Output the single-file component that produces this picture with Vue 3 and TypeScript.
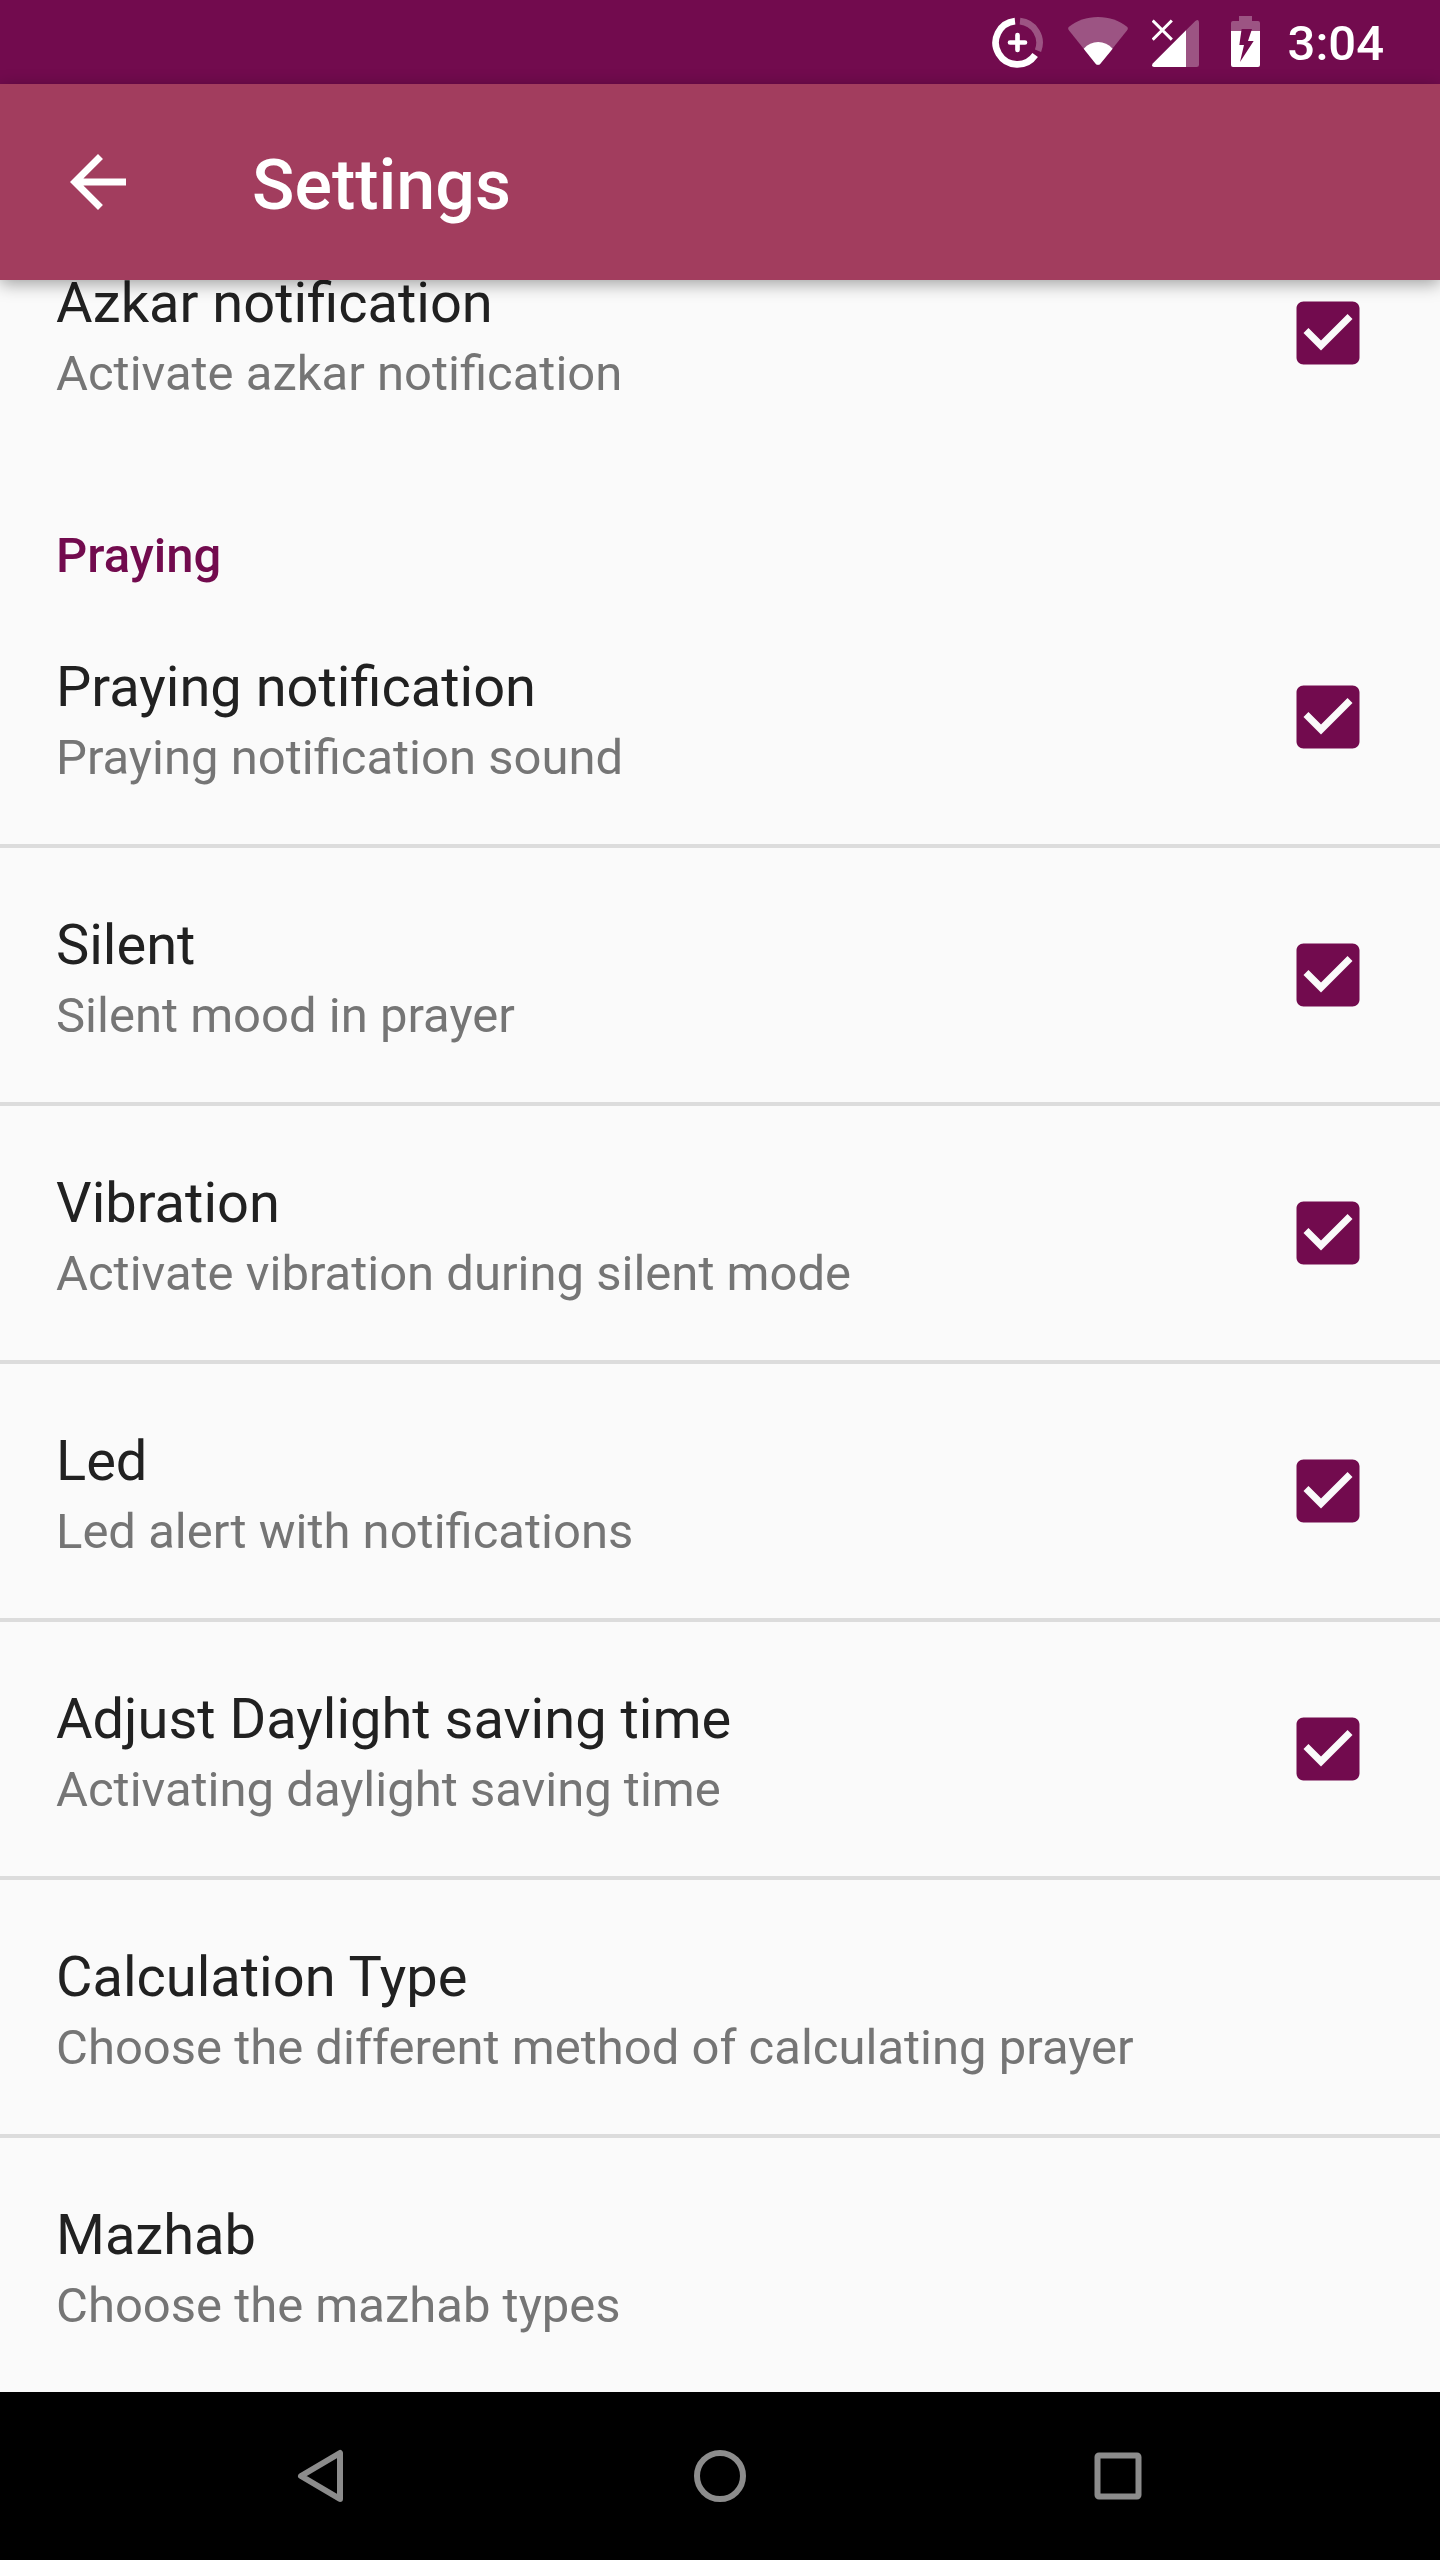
<script setup lang="ts">
import { reactive } from 'vue'

interface Preference {
  id: string
  title: string
  summary: string
  checked?: boolean
}

const azkar = reactive<Preference[]>([
  { id: 'azkar', title: 'Azkar notification', summary: 'Activate azkar notification', checked: true },
])

const praying = reactive<Preference[]>([
  { id: 'praying', title: 'Praying notification', summary: 'Praying notification sound', checked: true },
  { id: 'silent', title: 'Silent', summary: 'Silent mood in prayer', checked: true },
  { id: 'vibration', title: 'Vibration', summary: 'Activate vibration during silent mode', checked: true },
  { id: 'led', title: 'Led', summary: 'Led alert with notifications', checked: true },
  { id: 'daylight', title: 'Adjust Daylight saving time', summary: 'Activating daylight saving time', checked: true },
  { id: 'calculation', title: 'Calculation Type', summary: 'Choose the different method of calculating prayer' },
  { id: 'mazhab', title: 'Mazhab', summary: 'Choose the mazhab types' },
])

const groups = [
  { id: 'azkar-group', heading: '', items: azkar },
  { id: 'praying-group', heading: 'Praying', items: praying },
]
</script>

<template>
  <div class="screen">
    <div class="status-bar">
      <svg class="status-icon saver" viewBox="66 48 153 156" aria-hidden="true">
        <g fill="none" stroke="#fff" stroke-width="20">
          <path d="M135 63.400A65 65 0 1 0 195.500 165" />
          <path d="M150 63.400A65 65 0 0 1 204 152" opacity="0.3" />
        </g>
        <path d="M142.500 105V150M120 127.500H165" stroke="#fff" stroke-width="14" stroke-linecap="round" />
      </svg>
      <svg class="status-icon wifi" viewBox="294 48 180 156" aria-hidden="true">
        <path
          d="M296 81C320 62 350 51 384 51S448 62 472 81Q475 85 472 90L391 191Q384 198 377 191L296 90Q293 85 296 81Z"
          fill="#fff"
          opacity="0.3"
        />
        <path d="M341 146C353 133 368 126 384.500 126S416 133 428 146L391 191Q384 198 377 191Z" fill="#fff" />
      </svg>
      <svg class="status-icon signal" viewBox="546 48 141 156" aria-hidden="true">
        <path d="M648 91L676 63Q687 55 687 68V194Q687 201 680 201H648Z" fill="#fff" opacity="0.3" />
        <path d="M648 91V201H552Q542 199 549 190Z" fill="#fff" />
        <path d="M548 61.500L605.500 119M605.500 61.500L548 119" stroke="#fff" stroke-width="9" />
      </svg>
      <svg class="status-icon battery" viewBox="93 48 87 156" aria-hidden="true">
        <path d="M117 48H156V63H174Q180 63 180 69V93H93V69Q93 63 99 63H117Z" fill="#fff" opacity="0.3" />
        <path
          d="M93 93H124L118 135H132L120 186L161 123H144L154 93H180V195Q180 201 174 201H99Q93 201 93 195Z"
          fill="#fff"
        />
        <path d="M125 87H156L154 93H124Z" fill="#720b4e" />
      </svg>
      <time class="clock">3:04</time>
    </div>

    <header class="app-bar">
      <button class="back" type="button" aria-label="Navigate up">
        <svg viewBox="0 0 24 24" aria-hidden="true">
          <path d="M20 11H7.830l5.590-5.590L12 4l-8 8 8 8 1.410-1.410L7.830 13H20z" fill="#fff" />
        </svg>
      </button>
      <h1 class="title">Settings</h1>
    </header>

    <main class="content">
      <div class="list">
        <section v-for="group in groups" :key="group.id">
          <h2 v-if="group.heading" class="category">{{ group.heading }}</h2>
          <ul class="prefs">
            <li v-for="item in group.items" :key="item.id" class="pref">
              <label v-if="item.checked !== undefined" class="row" :for="item.id">
                <span class="texts">
                  <span class="name">{{ item.title }}</span>
                  <span class="summary">{{ item.summary }}</span>
                </span>
                <span class="check">
                  <input :id="item.id" v-model="item.checked" type="checkbox" />
                  <svg viewBox="0 0 64 64" aria-hidden="true">
                    <g transform="translate(-10 -10) scale(3.500)">
                      <path
                        v-if="item.checked"
                        d="M19 3H5c-1.110 0-2 .9-2 2v14c0 1.100.89 2 2 2h14c1.110 0 2-.9 2-2V5c0-1.100-.89-2-2-2zm-9 14l-5-5 1.410-1.410L10 14.170l7.590-7.590L19 8l-9 9z"
                        fill="#720b4e"
                      />
                      <path
                        v-else
                        d="M19 5v14H5V5h14m0-2H5c-1.100 0-2 .9-2 2v14c0 1.100.9 2 2 2h14c1.100 0 2-.9 2-2V5c0-1.100-.9-2-2-2z"
                        fill="#757575"
                      />
                    </g>
                  </svg>
                </span>
              </label>
              <button v-else class="row" type="button">
                <span class="texts">
                  <span class="name">{{ item.title }}</span>
                  <span class="summary">{{ item.summary }}</span>
                </span>
              </button>
            </li>
          </ul>
        </section>
      </div>
    </main>

    <nav class="nav-bar" aria-label="System navigation">
      <button type="button" aria-label="Back">
        <svg viewBox="0 0 56 56" aria-hidden="true">
          <path d="M46 5V51L7 28Z" />
        </svg>
      </button>
      <button type="button" aria-label="Home">
        <svg viewBox="0 0 56 56" aria-hidden="true">
          <circle cx="28" cy="28" r="23" />
        </svg>
      </button>
      <button type="button" aria-label="Overview">
        <svg viewBox="0 0 56 56" aria-hidden="true">
          <rect x="7.500" y="7.500" width="41" height="41" rx="1.500" />
        </svg>
      </button>
    </nav>
  </div>
</template>

<style>
body {
  background: #fafafa;
}
</style>

<style scoped>
.screen {
  display: flex;
  flex-direction: column;
  min-height: 100vh;
  background: #fafafa;
  font-family: Roboto, 'Liberation Sans', sans-serif;
}

button {
  padding: 0;
  border: 0;
  background: none;
  font: inherit;
  text-align: left;
  cursor: pointer;
}

svg {
  display: block;
}

.status-bar {
  display: flex;
  align-items: center;
  justify-content: flex-end;
  height: 84px;
  padding-right: 56px;
  background: #720b4e;
}

.status-icon {
  height: 52px;
}

.saver {
  width: 51px;
  margin-right: 25px;
}

.wifi {
  width: 60px;
  margin-right: 24px;
}

.signal {
  width: 47px;
  margin-right: 32px;
}

.battery {
  width: 29px;
  margin-right: 28px;
}

.clock {
  color: #fff;
  font-size: 49px;
  font-weight: 500;
  line-height: 60px;
  padding-top: 4px;
}

.app-bar {
  position: relative;
  z-index: 1;
  display: flex;
  align-items: center;
  gap: 112px;
  height: 196px;
  padding: 0 56px;
  background: #a23d5e;
  box-shadow: 0 4px 16px rgba(0, 0, 0, 0.36);
}

.back svg {
  width: 84px;
  height: 84px;
}

.title {
  margin: 0;
  padding-top: 6px;
  color: #fff;
  font-size: 70px;
  font-weight: 500;
  line-height: 82px;
}

.content {
  flex: 1;
  overflow: hidden;
}

/* The list is scrolled part of the way through its first row. */
.list {
  margin-top: -74px;
}

.category {
  margin: 0;
  padding: 67px 56px 5px;
  color: #720b4e;
  font-size: 49px;
  font-weight: 500;
  line-height: 58px;
}

.prefs {
  margin: 0;
  padding: 0;
  list-style: none;
}

.pref + .pref {
  border-top: 4px solid #dcdcdc;
}

.row {
  display: flex;
  align-items: center;
  justify-content: space-between;
  width: 100%;
  box-sizing: border-box;
  padding: 0 80px 0 56px;
  cursor: pointer;
}

.texts {
  display: flex;
  flex-direction: column;
  padding: 60px 0 52px;
}

.name {
  color: #212121;
  font-size: 56px;
  line-height: 74px;
}

.summary {
  color: #757575;
  font-size: 49px;
  line-height: 68px;
}

.check {
  display: grid;
  flex: none;
  width: 64px;
  height: 64px;
}

.check input,
.check svg {
  grid-area: 1 / 1;
  width: 64px;
  height: 64px;
  margin: 0;
}

.check input {
  appearance: none;
  cursor: pointer;
}

.check svg {
  pointer-events: none;
}

.nav-bar {
  display: grid;
  grid-template-columns: repeat(3, 1fr);
  height: 168px;
  padding: 0 123px;
  background: #000;
}

.nav-bar button {
  display: grid;
  place-items: center;
}

.nav-bar svg {
  width: 56px;
  height: 56px;
  fill: none;
  stroke: #8c8c8c;
  stroke-width: 6px;
  stroke-linejoin: round;
}
</style>
